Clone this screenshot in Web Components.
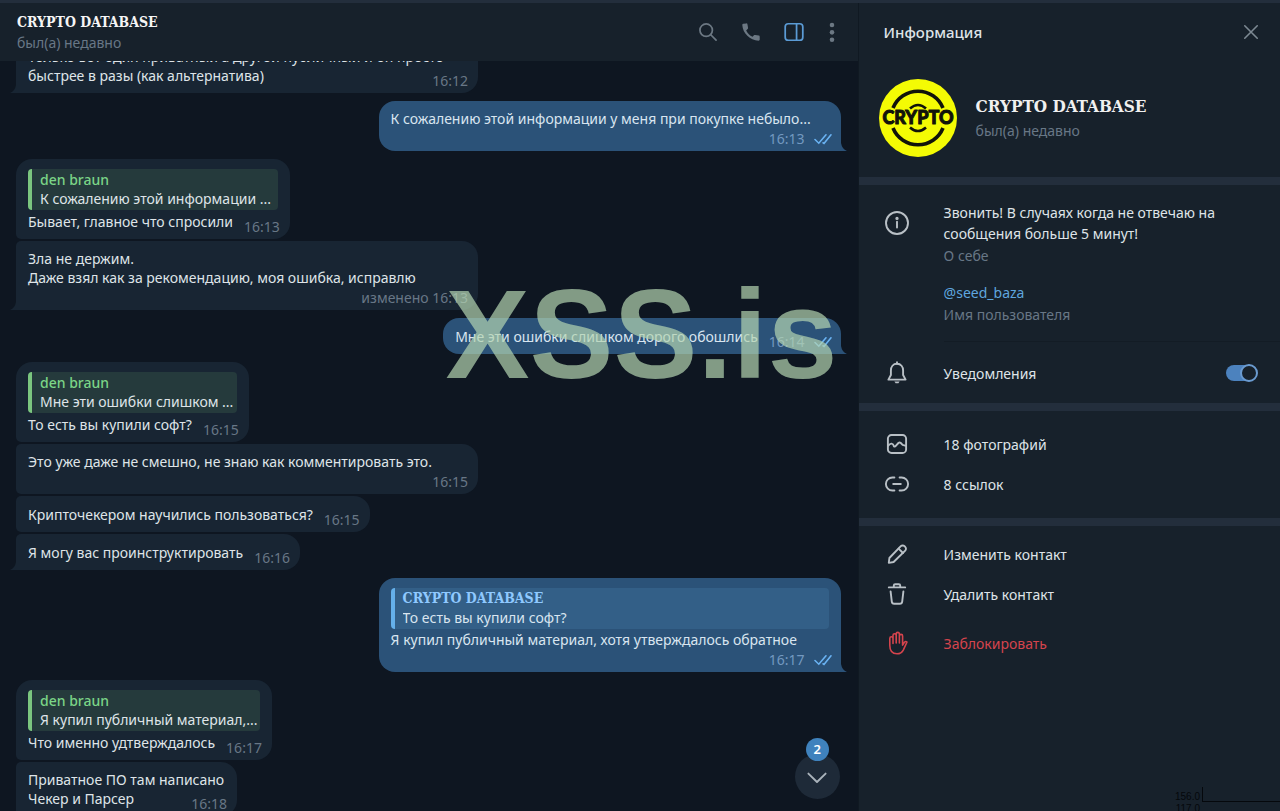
<!DOCTYPE html>
<html lang="ru">
<head>
<meta charset="UTF-8">
<meta name="viewport" content="width=device-width, initial-scale=1.0">
<title>CRYPTO DATABASE</title>
<style>
    html, body {
        height: 100%;
        margin: 0;
    }
    body {
        background: #0e1621;
        color: #dfe4e8;
        font: 14px/19px "Noto Sans", "Open Sans", sans-serif;
        --panel: #17212b;
        --line: #232e3c;
        --muted: #687786;
        --accent: #6ab3f3;
        --title-font: "DejaVu Serif Condensed", "DejaVu Serif", serif;
    }
</style>
</head>
<body>
<chat-app>
    <chat-header slot="header" name="CRYPTO DATABASE" status="был(а) недавно"></chat-header>

    <message-list slot="messages" offset="22">
        <chat-message tail wide tight time="16:12">Только вот один приватный а другой публичный и он просто<br>быстрее в разы (как альтернатива)</chat-message>
        <chat-message out tail wide first below time="16:13">К сожалению этой информации у меня при покупке небыло...</chat-message>
        <chat-message first time="16:13">
            <reply-quote slot="quote" author="den braun">К сожалению этой информации ...</reply-quote>
            Бывает, главное что спросили
        </chat-message>
        <chat-message tail wide below time="изменено 16:13">Зла не держим.<br>Даже взял как за рекомендацию, моя ошибка, исправлю</chat-message>
        <chat-message out tail first time="16:14">Мне эти ошибки слишком дорого обошлись</chat-message>
        <chat-message first time="16:15">
            <reply-quote slot="quote" author="den braun">Мне эти ошибки слишком ...</reply-quote>
            То есть вы купили софт?
        </chat-message>
        <chat-message wide below time="16:15">Это уже даже не смешно, не знаю как комментировать это.</chat-message>
        <chat-message time="16:15">Крипточекером научились пользоваться?</chat-message>
        <chat-message tail time="16:16">Я могу вас проинструктировать</chat-message>
        <chat-message out tail wide first below time="16:17">
            <reply-quote slot="quote" own author="CRYPTO DATABASE">То есть вы купили софт?</reply-quote>
            Я купил публичный материал, хотя утверждалось обратное
        </chat-message>
        <chat-message first time="16:17">
            <reply-quote slot="quote" author="den braun">Я купил публичный материал,...</reply-quote>
            Что именно удтверждалось
        </chat-message>
        <chat-message tight time="16:18">Приватное ПО там написано<br>Чекер и Парсер</chat-message>
    </message-list>

    <scroll-down slot="overlay" count="2"></scroll-down>
    <water-mark slot="overlay">XSS.is</water-mark>

    <info-panel slot="info" name="CRYPTO DATABASE" status="был(а) недавно"></info-panel>
</chat-app>

<script>
// Stroke icons, drawn on a 24x24 grid
const ICONS = {
    search: '<circle cx="10" cy="10" r="6.8"/><path d="M15 15 20.8 20.8"/>',
    phone: '<path fill="currentColor" stroke="none" d="M3.6 3 6.9 2.6C7.6 2.5 8 2.8 8.1 3.5L8.8 7.4C8.9 8 8.7 8.4 8.3 8.8L6.7 10.3C8.3 13.4 10.6 15.7 13.7 17.3L15.2 15.6C15.6 15.2 16 15.1 16.6 15.2L20.5 15.9C21.2 16 21.5 16.4 21.5 17.1V20.3C21.5 21 21 21.5 20.3 21.5 10.9 21.1 3 13.4 2.5 4.3 2.5 3.5 2.9 3.1 3.6 3Z"/>',
    panel: '<rect x="2.4" y="3" width="19.2" height="18" rx="3.4"/><path d="M14.8 3V21"/>',
    dots: '<g fill="currentColor" stroke="none"><circle cx="12" cy="4.4" r="2.5"/><circle cx="12" cy="12.4" r="2.5"/><circle cx="12" cy="20.4" r="2.5"/></g>',
    close: '<path d="M4.5 4.5 19.5 19.5M19.5 4.5 4.5 19.5"/>',
    info: '<circle cx="12" cy="12" r="11"/><path d="M12 10.6V16.6"/><circle cx="12" cy="7.4" r="0.7" fill="currentColor"/>',
    bell: '<path d="M12 2.8C8 2.8 5.9 5.8 5.9 9.4V14L3.4 18.6H20.6L18.1 14V9.4C18.1 5.8 16 2.8 12 2.8Z"/><path d="M12 1.2V2.8"/><path d="M9.4 20.6H14.6L13.4 22.2H10.6Z" fill="currentColor" stroke="none"/>',
    photo: '<rect x="2.9" y="3" width="18.2" height="18" rx="3.6"/><path d="M3 13.8Q5 11.4 6.6 11.6T9 14.4Q10 15 11 13.6L13.4 11Q14.6 10 15.8 11L17.6 12.8 21 13.8"/>',
    link: '<path d="M9.4 5.5H7.4A6.5 6.5 0 0 0 7.4 18.5H9.4M14.6 5.5H16.6A6.5 6.5 0 0 1 16.6 18.5H14.6M8.2 12H15.8"/>',
    pencil: '<path d="M4.4 16 15.8 4.2A2.6 2.6 0 0 1 19.5 4.2L20.2 4.9A2.6 2.6 0 0 1 20.2 8.6L8.6 20 3.8 20.9Z"/><path d="M13.6 6.6 18 11"/>',
    trash: '<path d="M3.8 5.4H20.2M8.8 5V3.6Q8.8 2.2 10.2 2.2H13.8Q15.2 2.2 15.2 3.6V5M5.6 9.4 6.8 19.6Q7 21.8 9.2 21.8H14.8Q17 21.8 17.2 19.6L18.4 9.4"/>',
    hand: '<path stroke-width="1.6" d="M4.8 14.6V7.4A1.6 1.6 0 0 1 8 7.4V12.4M8 12V4.4A1.6 1.6 0 0 1 11.2 4.4V12M11.2 11.6V3A1.6 1.6 0 0 1 14.4 3V12M14.4 11.6V5A1.6 1.6 0 0 1 17.6 5V14.2L19.2 11.6Q20.6 9.8 22 11L18.4 18.8Q16.4 22.8 12 22.8 4.8 22.8 4.8 14.6"/>',
    down: '<path d="M3.4 8.6 12 17 20.6 8.6"/>'
};

class UiIcon extends HTMLElement {
    constructor() {
        super();
        this.attachShadow({ mode: 'open' });
    }

    connectedCallback() {
        this.shadowRoot.innerHTML = `
            <style>
                :host {
                    display: block;
                    flex: none;
                    width: 24px;
                    height: 24px;
                }
                svg {
                    display: block;
                    width: 100%;
                    height: 100%;
                    overflow: visible;
                    fill: none;
                    stroke: currentColor;
                    stroke-width: 1.9;
                    stroke-linecap: round;
                    stroke-linejoin: round;
                }
            </style>
            <svg viewBox="0 0 24 24" aria-hidden="true">${ICONS[this.getAttribute('name')] || ''}</svg>
        `;
    }
}
customElements.define('ui-icon', UiIcon);

// Page frame: chat on the left, info column on the right
class ChatApp extends HTMLElement {
    constructor() {
        super();
        this.attachShadow({ mode: 'open' });
        this.shadowRoot.innerHTML = `
            <style>
                :host {
                    display: flex;
                    box-sizing: border-box;
                    height: 100vh;
                    border-top: 3px solid var(--line);
                    overflow: hidden;
                }
                .chat {
                    position: relative;
                    display: flex;
                    flex-direction: column;
                    flex: 1;
                    min-width: 0;
                }
                .info {
                    flex: none;
                    width: 33%;
                    min-width: 320px;
                }
            </style>
            <main class="chat">
                <slot name="header"></slot>
                <slot name="messages"></slot>
                <slot name="overlay"></slot>
            </main>
            <aside class="info"><slot name="info"></slot></aside>
        `;
    }
}
customElements.define('chat-app', ChatApp);

class ChatHeader extends HTMLElement {
    constructor() {
        super();
        this.attachShadow({ mode: 'open' });
    }

    connectedCallback() {
        this.shadowRoot.innerHTML = `
            <style>
                :host {
                    display: flex;
                    align-items: center;
                    justify-content: space-between;
                    box-sizing: border-box;
                    flex: none;
                    height: 58px;
                    padding: 0 20px 0 17px;
                    background: var(--panel);
                }
                h1 {
                    margin: 0;
                    font: bold 14px/22px var(--title-font);
                    color: #f5f5f5;
                }
                p {
                    margin: 0;
                    line-height: 20px;
                    color: var(--muted);
                }
                nav {
                    display: flex;
                    gap: 21px;
                }
                button {
                    padding: 0;
                    border: none;
                    background: none;
                    color: #6c7883;
                    cursor: pointer;
                }
                button.active {
                    color: #5b9bd5;
                }
                ui-icon {
                    width: 22px;
                    height: 22px;
                }
                ui-icon[name="dots"] {
                    margin: 0 -5px;
                }
            </style>
            <div>
                <h1>${this.getAttribute('name')}</h1>
                <p>${this.getAttribute('status')}</p>
            </div>
            <nav>
                <button type="button" aria-label="Поиск"><ui-icon name="search"></ui-icon></button>
                <button type="button" aria-label="Позвонить"><ui-icon name="phone"></ui-icon></button>
                <button type="button" aria-label="Информация" class="active"><ui-icon name="panel"></ui-icon></button>
                <button type="button" aria-label="Меню"><ui-icon name="dots"></ui-icon></button>
            </nav>
        `;
    }
}
customElements.define('chat-header', ChatHeader);

class MessageList extends HTMLElement {
    constructor() {
        super();
        this.attachShadow({ mode: 'open' });
        this.shadowRoot.innerHTML = `
            <style>
                :host {
                    display: flex;
                    flex-direction: column;
                    flex: 1;
                    min-height: 0;
                    padding: 0 17px 20px 16px;
                    overflow-y: auto;
                    scrollbar-width: none;
                }
                ::slotted(*) {
                    flex: none;
                    margin-top: 2px;
                }
                ::slotted([first]) {
                    margin-top: 8px;
                }
                ::slotted(:first-child) {
                    margin-top: 0;
                }
            </style>
            <slot></slot>
        `;
    }

    connectedCallback() {
        // Wait until all the messages are upgraded, then restore the scroll
        requestAnimationFrame(() => {
            this.scrollTop = Number(this.getAttribute('offset')) || 0;
        });
    }
}
customElements.define('message-list', MessageList);

class ChatMessage extends HTMLElement {
    constructor() {
        super();
        this.attachShadow({ mode: 'open' });
    }

    connectedCallback() {
        const out = this.hasAttribute('out');
        const checks = `
            <svg class="checks" viewBox="0 0 18 12" aria-label="Прочитано">
                <path d="M1 6.5 4.8 10.2 12 1.8M9 9.8 10 10.4 17 1.8"/>
            </svg>`;

        this.shadowRoot.innerHTML = `
            <style>
                :host {
                    --bubble: #182533;
                    position: relative;
                    display: block;
                    box-sizing: border-box;
                    align-self: flex-start;
                    max-width: 462px;
                    padding: 8px 12px;
                    border-radius: 5px 16px 16px 5px;
                    background: var(--bubble);
                }
                :host([first]) {
                    border-top-left-radius: 16px;
                }
                :host([wide]) {
                    width: 100%;
                }
                :host([out]) {
                    --bubble: #2b5278;
                    align-self: flex-end;
                    border-radius: 16px;
                    color: #d9e5f0;
                }
                :host([tail]) {
                    border-bottom-left-radius: 0;
                }
                :host([out][tail]) {
                    border-bottom-left-radius: 16px;
                    border-bottom-right-radius: 0;
                }
                .tail {
                    position: absolute;
                    bottom: 0;
                    left: -6px;
                    width: 6px;
                    height: 8px;
                    fill: var(--bubble);
                }
                :host([out]) .tail {
                    left: auto;
                    right: -6px;
                    transform: scaleX(-1);
                }
                .body {
                    display: flex;
                    align-items: flex-end;
                    justify-content: space-between;
                    column-gap: 11px;
                    min-height: 20px;
                }
                :host([below]) .body {
                    flex-direction: column;
                    align-items: stretch;
                    row-gap: 1px;
                }
                .meta {
                    display: flex;
                    align-items: center;
                    justify-content: flex-end;
                    gap: 9px;
                    margin: 0 -2px -5px 0;
                    color: var(--muted);
                    white-space: nowrap;
                }
                :host([out]) .meta {
                    margin-right: -3px;
                    color: #7399c0;
                }
                /* the last line is short, so the time may stand under the first one */
                :host([tight]) .body {
                    column-gap: 0;
                }
                :host([tight]) .text {
                    margin-right: -33px;
                }
                .checks {
                    width: 18px;
                    height: 12px;
                    fill: none;
                    stroke: var(--accent);
                    stroke-width: 1.6;
                    stroke-linecap: round;
                }
            </style>
            <slot name="quote"></slot>
            <div class="body">
                <div class="text"><slot></slot></div>
                <div class="meta"><time>${this.getAttribute('time')}</time>${out ? checks : ''}</div>
            </div>
            ${this.hasAttribute('tail') ? '<svg class="tail" viewBox="0 0 6 8"><path d="M6 0V8H0Q5 6 6 0Z"/></svg>' : ''}
        `;
    }
}
customElements.define('chat-message', ChatMessage);

class ReplyQuote extends HTMLElement {
    constructor() {
        super();
        this.attachShadow({ mode: 'open' });
    }

    connectedCallback() {
        this.shadowRoot.innerHTML = `
            <style>
                :host {
                    display: block;
                    box-sizing: border-box;
                    width: 0;
                    min-width: 100%;
                    margin: 2px 0 1px;
                    padding: 1px 0 2px 8px;
                    border-left: 4px solid #7bc67f;
                    border-radius: 4px;
                    background: #253a3c;
                }
                :host([own]) {
                    border-left-color: #65b0ea;
                    background: #335f87;
                }
                b {
                    display: block;
                    font-weight: 500;
                    color: #7bd487;
                }
                :host([own]) b {
                    font: bold 14px/19px var(--title-font);
                    color: #8fc9ff;
                }
                .text {
                    overflow: hidden;
                    text-overflow: ellipsis;
                    white-space: nowrap;
                }
            </style>
            <b>${this.getAttribute('author')}</b>
            <div class="text"><slot></slot></div>
        `;
    }
}
customElements.define('reply-quote', ReplyQuote);

// Round button over the chat, with the unread counter
class ScrollDown extends HTMLElement {
    constructor() {
        super();
        this.attachShadow({ mode: 'open' });
    }

    connectedCallback() {
        this.shadowRoot.innerHTML = `
            <style>
                :host {
                    position: absolute;
                    right: 18px;
                    bottom: 12px;
                }
                button {
                    display: grid;
                    place-items: center;
                    width: 45px;
                    height: 45px;
                    padding: 0;
                    border: none;
                    border-radius: 50%;
                    background: #1e2a38;
                    color: #aab3bb;
                    cursor: pointer;
                }
                .count {
                    position: absolute;
                    left: 11px;
                    bottom: 38px;
                    width: 23px;
                    height: 23px;
                    border-radius: 50%;
                    background: #3f82bd;
                    color: #fff;
                    font-size: 13px;
                    font-weight: 600;
                    line-height: 23px;
                    text-align: center;
                }
            </style>
            <button type="button" aria-label="Вниз"><ui-icon name="down"></ui-icon></button>
            <span class="count">${this.getAttribute('count')}</span>
        `;
    }
}
customElements.define('scroll-down', ScrollDown);

class WaterMark extends HTMLElement {
    constructor() {
        super();
        this.attachShadow({ mode: 'open' });
        this.shadowRoot.innerHTML = `
            <style>
                :host {
                    position: absolute;
                    top: 260px;
                    right: 20px;
                    font: bold 126px/144px "Liberation Sans", Arial, sans-serif;
                    color: rgba(180, 212, 177, 0.7);
                    pointer-events: none;
                }
            </style>
            <slot></slot>
        `;
    }
}
customElements.define('water-mark', WaterMark);

// One line of the info column: icon, text and an optional control
class InfoRow extends HTMLElement {
    constructor() {
        super();
        this.attachShadow({ mode: 'open' });
    }

    connectedCallback() {
        this.shadowRoot.innerHTML = `
            <style>
                :host {
                    display: flex;
                    align-items: center;
                    gap: 35px;
                    box-sizing: border-box;
                    min-height: 40px;
                    padding: 0 23px 0 26px;
                }
                :host([danger]) {
                    margin-top: 9px;
                    color: #d5444d;
                }
                ui-icon {
                    color: #b9c0c6;
                }
                :host([danger]) ui-icon {
                    color: inherit;
                }
                .text {
                    flex: 1;
                }
                ::slotted(button) {
                    padding: 0;
                    border: none;
                    background: none;
                    color: inherit;
                    font: inherit;
                    cursor: pointer;
                }
            </style>
            <ui-icon name="${this.getAttribute('icon')}"></ui-icon>
            <div class="text"><slot></slot></div>
            <slot name="control"></slot>
        `;
    }
}
customElements.define('info-row', InfoRow);

class InfoPanel extends HTMLElement {
    constructor() {
        super();
        this.attachShadow({ mode: 'open' });
    }

    connectedCallback() {
        const name = this.getAttribute('name');

        this.shadowRoot.innerHTML = `
            <style>
                :host {
                    position: relative;
                    display: block;
                    box-sizing: border-box;
                    height: 100%;
                    border-left: 1px solid #101922;
                    background: var(--panel);
                    overflow: hidden;
                }
                header {
                    display: flex;
                    align-items: center;
                    justify-content: space-between;
                    height: 58px;
                    padding: 0 19px 0 25px;
                }
                h2 {
                    margin: 0;
                    font-size: 15px;
                    font-weight: 500;
                }
                header button {
                    padding: 0;
                    border: none;
                    background: none;
                    color: #7d8993;
                    cursor: pointer;
                }
                header ui-icon {
                    width: 20px;
                    height: 20px;
                }
                .profile {
                    display: flex;
                    align-items: center;
                    gap: 19px;
                    padding: 18px 20px 20px;
                }
                .avatar {
                    flex: none;
                    width: 78px;
                    height: 78px;
                }
                h3 {
                    margin: 0;
                    font: bold 17px/26px var(--title-font);
                    color: #f0f0f0;
                }
                p {
                    margin: 0;
                }
                .muted {
                    line-height: 24px;
                    color: var(--muted);
                }
                section {
                    padding: 13px 0 14px;
                    border-top: 8px solid var(--line);
                }
                .contact {
                    padding-bottom: 10px;
                }
                .actions {
                    padding-top: 8px;
                }
                .about {
                    display: flex;
                    gap: 35px;
                    padding: 4px 0 0 26px;
                }
                .about ui-icon {
                    margin-top: 9px;
                    color: #b9c0c6;
                }
                .about div {
                    flex: 1;
                    padding-bottom: 14px;
                    border-bottom: 1px solid #131c25;
                }
                .about p {
                    max-width: 290px;
                    line-height: 21px;
                }
                .about .link {
                    margin-top: 14px;
                }
                .about a {
                    color: #5fa6df;
                    text-decoration: none;
                }
                .notify {
                    margin-top: 11px;
                }
                .switch {
                    appearance: none;
                    display: flex;
                    align-items: center;
                    justify-content: flex-end;
                    width: 31px;
                    height: 16px;
                    margin: 0;
                    border-radius: 8px;
                    background: #4c82be;
                }
                .switch::before {
                    content: "";
                    box-sizing: border-box;
                    width: 18px;
                    height: 18px;
                    margin-right: -1px;
                    flex: none;
                    border: 2px solid #6b9bd0;
                    border-radius: 50%;
                    background: var(--panel);
                }
                .axis {
                    position: absolute;
                    right: 0;
                    bottom: -6px;
                    display: flex;
                    gap: 2px;
                    height: 30px;
                    color: #05080c;
                    font: 10px/12px "Liberation Sans", Arial, sans-serif;
                    text-align: right;
                }
                .axis span {
                    display: block;
                    padding-top: 4px;
                }
                .axis i {
                    width: 77px;
                    height: 14px;
                    border-left: 1px solid;
                    border-bottom: 1px solid;
                }
            </style>
            <header>
                <h2>Информация</h2>
                <button type="button" aria-label="Закрыть"><ui-icon name="close"></ui-icon></button>
            </header>
            <div class="profile">
                <svg class="avatar" viewBox="0 0 78 78" role="img" aria-label="${name}">
                    <circle cx="39" cy="39" r="39" fill="#f4fb04"/>
                    <g fill="none" stroke="#11130a" stroke-width="3.6">
                        <path d="M14 29A27 27 0 0 1 64 29M14 49A27 27 0 0 0 64 49"/>
                        <path d="M31 29.5Q39 22.5 47 29.5M31 48.5Q39 55.5 47 48.5" stroke-width="2.6"/>
                    </g>
                    <text x="39" y="45" text-anchor="middle" font-family="Lato, Inter, sans-serif" font-weight="900" font-size="18" fill="#11130a" stroke="#11130a" stroke-width="1" stroke-linejoin="round">CRYPTO</text>
                </svg>
                <div>
                    <h3>${name}</h3>
                    <p class="muted">${this.getAttribute('status')}</p>
                </div>
            </div>
            <section class="contact">
                <div class="about">
                    <ui-icon name="info"></ui-icon>
                    <div>
                        <p>Звонить! В случаях когда не отвечаю на сообщения больше 5 минут!</p>
                        <span class="muted">О себе</span>
                        <p class="link"><a href="#seed_baza">@seed_baza</a></p>
                        <span class="muted">Имя пользователя</span>
                    </div>
                </div>
                <info-row class="notify" icon="bell">
                    <label for="notify">Уведомления</label>
                    <input slot="control" class="switch" type="checkbox" role="switch" id="notify" checked>
                </info-row>
            </section>
            <section>
                <info-row icon="photo"><button type="button">18 фотографий</button></info-row>
                <info-row icon="link"><button type="button">8 ссылок</button></info-row>
            </section>
            <section class="actions">
                <info-row icon="pencil"><button type="button">Изменить контакт</button></info-row>
                <info-row icon="trash"><button type="button">Удалить контакт</button></info-row>
                <info-row icon="hand" danger><button type="button">Заблокировать</button></info-row>
            </section>
            <div class="axis"><div><span>156.0</span>117.0</div><i></i></div>
        `;
    }
}
customElements.define('info-panel', InfoPanel);
</script>
</body>
</html>
